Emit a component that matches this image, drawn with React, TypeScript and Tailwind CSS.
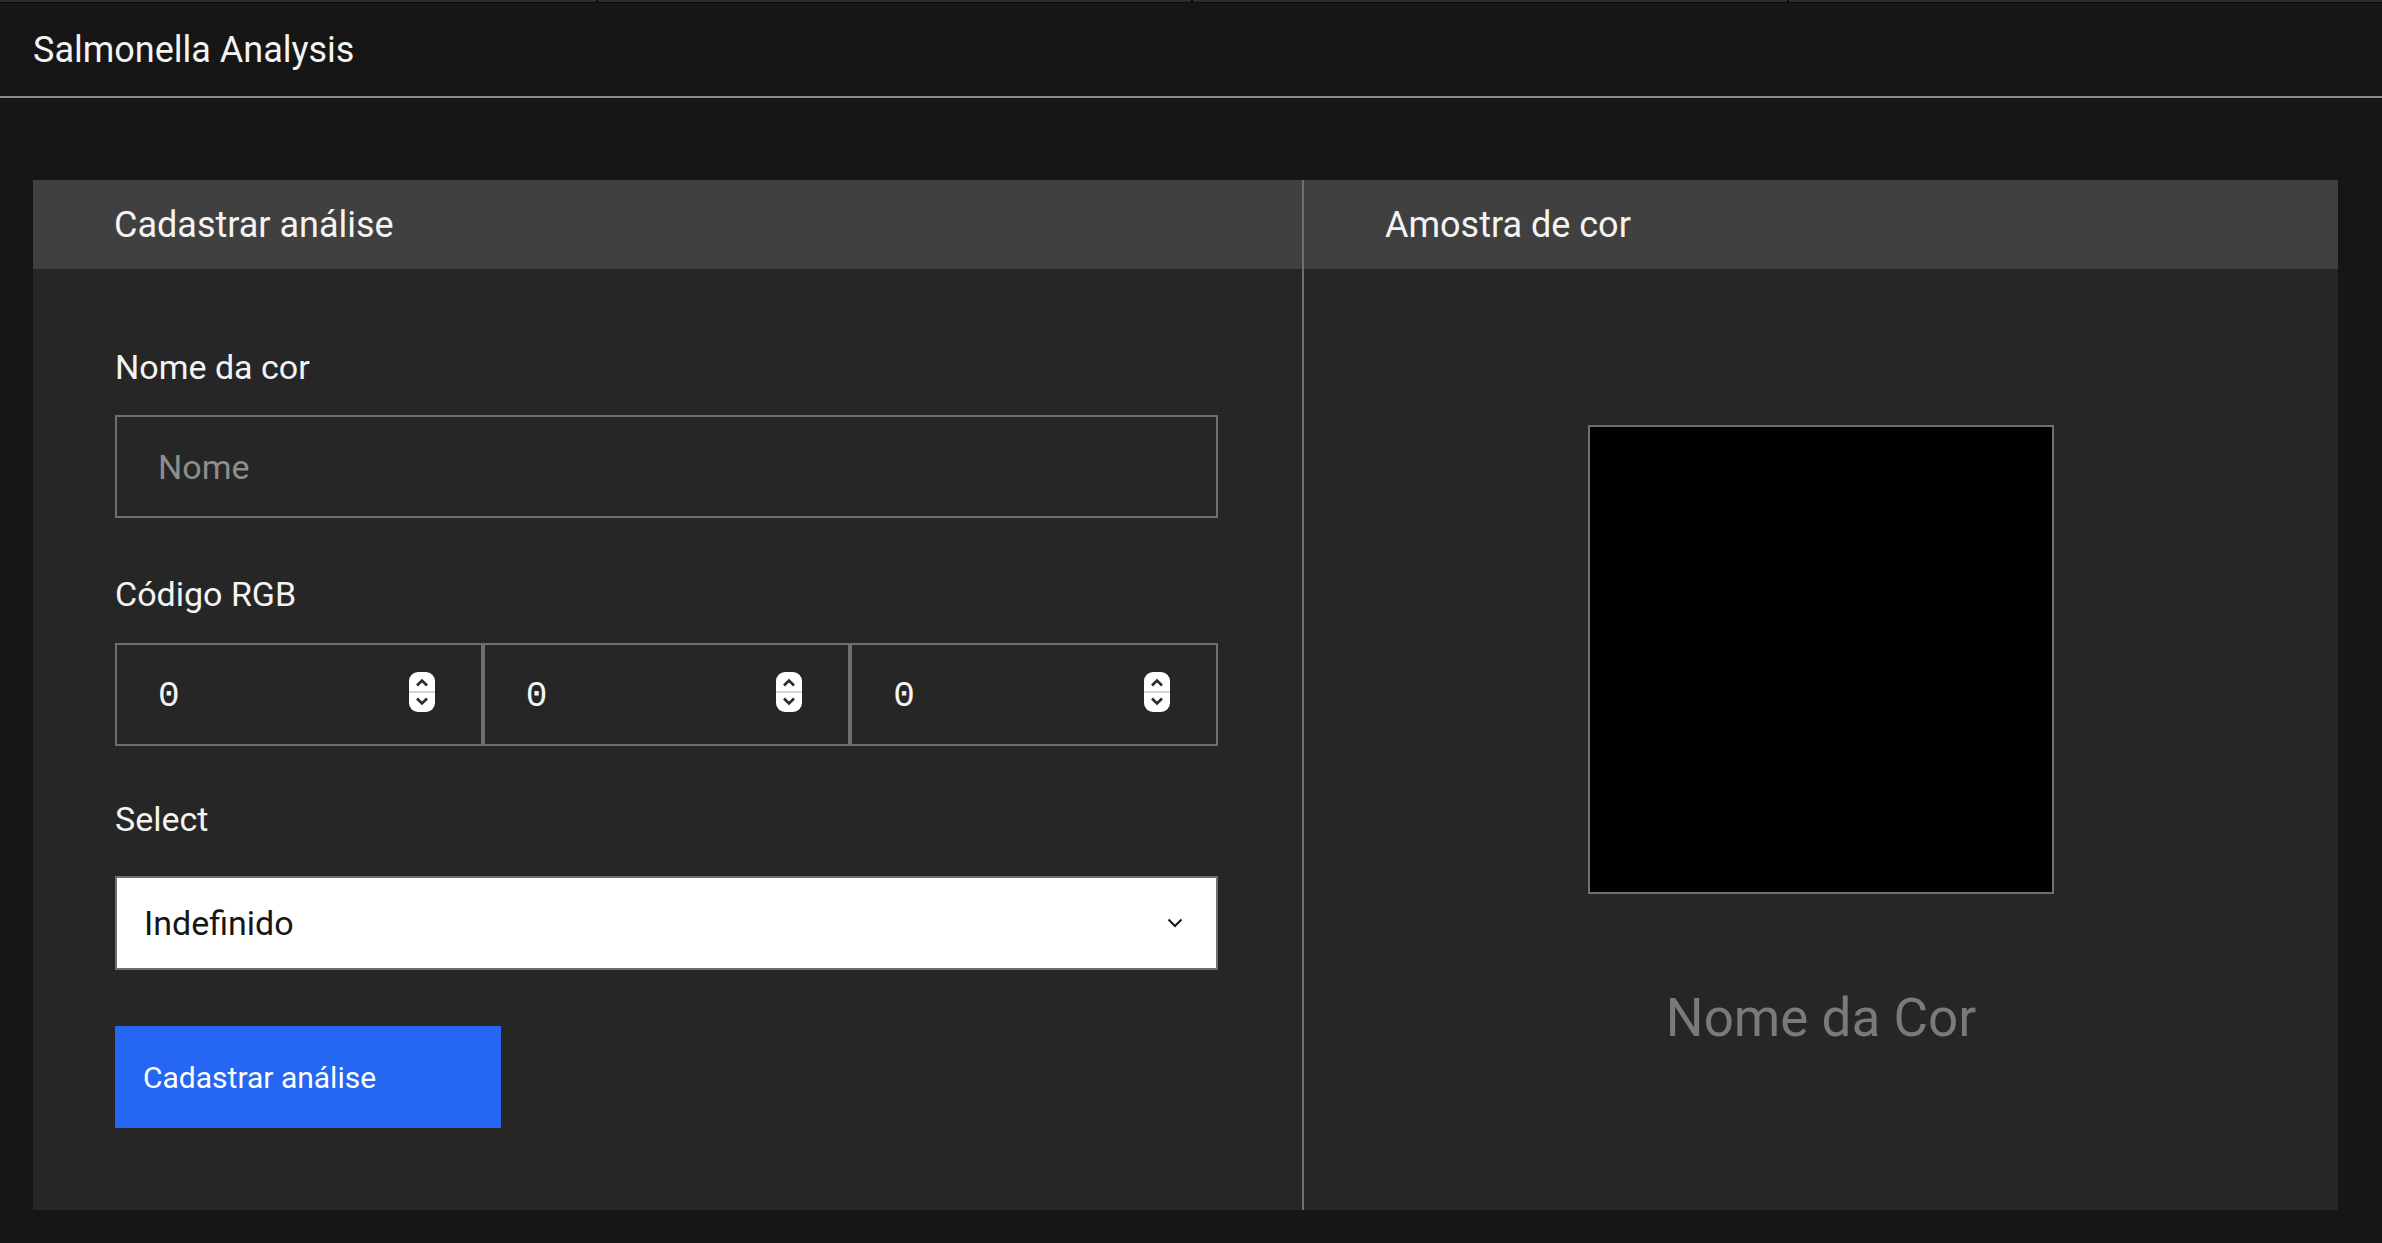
import React, { useState } from "react";

const FONT = { fontFamily: "Roboto, 'Noto Sans', sans-serif" };

const Spinner = () => (
  <div className="flex flex-col items-center justify-between w-[26px] h-[40px] mb-[5px] rounded-[9px] bg-white py-[6px] shrink-0">
    <svg width="14" height="9" viewBox="0 0 14 9" fill="none">
      <path d="M2 7.5 L7 2.5 L12 7.5" stroke="#2a2a2a" strokeWidth="2.6" />
    </svg>
    <div className="w-full h-[2px] bg-[#d6d6d6]" />
    <svg width="14" height="9" viewBox="0 0 14 9" fill="none">
      <path d="M2 1.5 L7 6.5 L12 1.5" stroke="#2a2a2a" strokeWidth="2.6" />
    </svg>
  </div>
);

const NumberBox = ({ value, onChange }: { value: string; onChange: (v: string) => void }) => (
  <div className="flex items-center flex-1 basis-0 min-w-0 h-[103px] border-2 border-[#6f6f6f] pl-[41px] pr-[46px]">
    <input
      type="number"
      value={value}
      onChange={(e) => onChange(e.target.value)}
      className="flex-1 w-0 min-w-0 pt-[4px] bg-transparent outline-none text-[36px] text-[#f4f4f4] [appearance:textfield] [&::-webkit-inner-spin-button]:appearance-none [&::-webkit-outer-spin-button]:appearance-none"
      style={{ fontFamily: "'Liberation Mono', 'DejaVu Sans Mono', monospace" }}
    />
    <Spinner />
  </div>
);

export default function App() {
  const [nome, setNome] = useState("");
  const [r, setR] = useState("0");
  const [g, setG] = useState("0");
  const [b, setB] = useState("0");
  const [tipo, setTipo] = useState("Indefinido");

  const cor = `rgb(${Number(r) || 0}, ${Number(g) || 0}, ${Number(b) || 0})`;

  return (
    <div className="min-h-screen bg-[#161616] text-[#f4f4f4]" style={FONT}>
      {/* faixa superior */}
      <div className="grid grid-cols-4 h-[3px]">
        <div className="bg-[#2b2b2b] border-b border-[#0c0c0c]" />
        <div className="bg-[#2b2b2b] border-b border-l-2 border-[#0c0c0c]" />
        <div className="bg-[#2b2b2b] border-b border-l-2 border-[#0c0c0c]" />
        <div className="bg-[#2b2b2b] border-b border-l-2 border-[#0c0c0c]" />
      </div>

      <header className="h-[95px] flex items-center px-[33px] border-b-2 border-[#8a8a8a]">
        <span className="text-[36px] leading-none">Salmonella Analysis</span>
      </header>

      <main className="pt-[82px] pl-[33px] pr-[44px]">
        <div className="flex h-[1030px] bg-[#262626]">
          {/* Formulário */}
          <section className="w-[1271px] shrink-0 border-r-2 border-[#6f6f6f] flex flex-col">
            <div className="h-[89px] bg-[#404040] flex items-center px-[81px]">
              <h2 className="text-[36px] font-normal">Cadastrar análise</h2>
            </div>

            <div className="pl-[82px] pr-[84px] pt-[74px] flex flex-col">
              <label className="text-[34px] leading-[48px] mb-[24px]">Nome da cor</label>
              <input
                value={nome}
                onChange={(e) => setNome(e.target.value)}
                placeholder="Nome"
                className="h-[103px] border-2 border-[#6f6f6f] bg-transparent px-[41px] text-[34px] text-[#f4f4f4] placeholder:text-[#8d8d8d] outline-none"
              />

              <label className="text-[34px] leading-[48px] mt-[52px] mb-[25px]">Código RGB</label>
              <div className="flex">
                <NumberBox value={r} onChange={setR} />
                <NumberBox value={g} onChange={setG} />
                <NumberBox value={b} onChange={setB} />
              </div>

              <label className="text-[34px] leading-[48px] mt-[49px] mb-[33px]">Select</label>
              <div className="relative h-[94px] border-2 border-[#6f6f6f] bg-white">
                <select
                  value={tipo}
                  onChange={(e) => setTipo(e.target.value)}
                  className="w-full h-full appearance-none bg-transparent pl-[27px] pr-[80px] text-[34px] text-[#161616] outline-none"
                  style={FONT}
                >
                  <option>Indefinido</option>
                  <option>Positivo</option>
                  <option>Negativo</option>
                </select>
                <svg
                  className="absolute right-[33px] top-1/2 -translate-y-1/2 pointer-events-none"
                  width="16"
                  height="10"
                  viewBox="0 0 16 10"
                  fill="none"
                >
                  <path d="M1.5 1.5 L8 8 L14.5 1.5" stroke="#161616" strokeWidth="2" />
                </svg>
              </div>

              <button className="mt-[56px] w-[386px] h-[102px] bg-[#2566f3] text-left pl-[28px] text-[30px] text-white">
                Cadastrar análise
              </button>
            </div>
          </section>

          {/* Amostra */}
          <section className="flex-1 flex flex-col">
            <div className="h-[89px] bg-[#404040] flex items-center px-[81px]">
              <h2 className="text-[36px] font-normal">Amostra de cor</h2>
            </div>
            <div className="flex flex-col items-center pt-[156px]">
              <div className="w-[466px] h-[469px] border-2 border-[#6f6f6f]" style={{ backgroundColor: cor }} />
              <p className="mt-[92px] text-[53px] leading-[65px] text-[#7a7a7a]">{nome || "Nome da Cor"}</p>
            </div>
          </section>
        </div>
      </main>
    </div>
  );
}
